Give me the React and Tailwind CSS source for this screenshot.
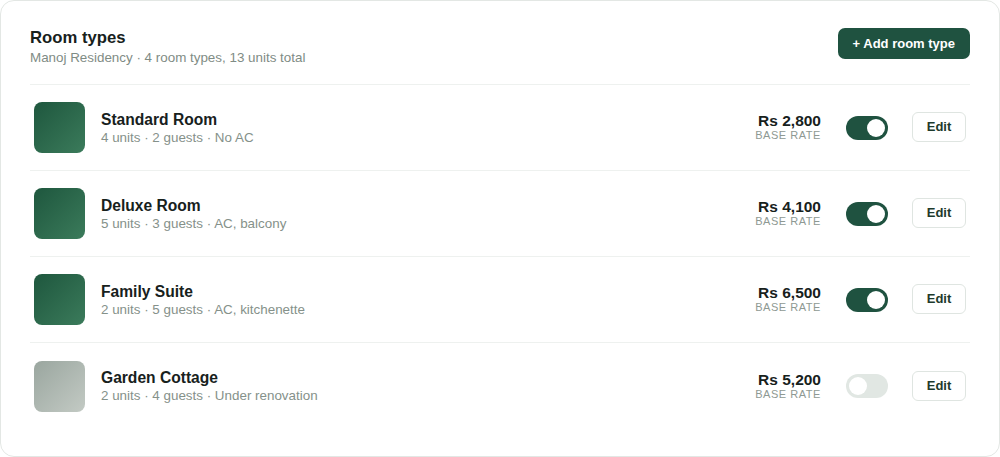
import React from "react";

const rooms = [
  { name: "Standard Room", info: "4 units · 2 guests · No AC", price: "Rs 2,800", on: true },
  { name: "Deluxe Room", info: "5 units · 3 guests · AC, balcony", price: "Rs 4,100", on: true },
  { name: "Family Suite", info: "2 units · 5 guests · AC, kitchenette", price: "Rs 6,500", on: true },
  { name: "Garden Cottage", info: "2 units · 4 guests · Under renovation", price: "Rs 5,200", on: false },
];

function Toggle({ on }) {
  return (
    <div
      className={
        on
          ? "w-[42px] h-[24px] rounded-full bg-[#1f5240] flex items-center justify-end px-[3px]"
          : "w-[42px] h-[24px] rounded-full bg-[#e1e7e3] flex items-center justify-start px-[3px]"
      }
    >
      <div className="w-[18px] h-[18px] rounded-full bg-white" />
    </div>
  );
}

export default function App() {
  return (
    <div
      className="w-[1000px] h-[457px] bg-white"
      style={{ fontFamily: '"Liberation Sans", Arial, sans-serif' }}
    >
      <div className="h-[457px] border border-[#e3e7e4] rounded-[14px] px-[29px] pt-[27px]">
        <div className="flex items-start justify-between border-b border-[#eef1ef] pb-[17px]">
          <div>
            <div className="text-[16.7px] leading-[20px] font-bold text-[#17211c]">Room types</div>
            <div className="text-[13.4px] leading-[18px] text-[#7f8c85] mt-[1px]">
              Manoj Residency · 4 room types, 13 units total
            </div>
          </div>
          <button className="h-[31px] px-[15px] rounded-[7px] bg-[#1f5240] text-white text-[13px] font-bold">
            + Add room type
          </button>
        </div>
        {rooms.map((r, i) => (
          <div
            key={r.name}
            className={
              i < rooms.length - 1
                ? "flex items-center h-[86px] border-b border-[#eef1ef] pl-[4px] pr-[4px]"
                : "flex items-center h-[86px] pl-[4px] pr-[4px]"
            }
          >
            <div
              className={
                r.on
                  ? "w-[51px] h-[51px] rounded-[8px] bg-gradient-to-br from-[#1e573e] to-[#3b7b5b]"
                  : "w-[51px] h-[51px] rounded-[8px] bg-gradient-to-br from-[#9aa69f] to-[#c3cac4]"
              }
            />
            <div className="ml-[16px] flex-1 pt-[2px]">
              <div className="text-[15.6px] leading-[18px] font-bold text-[#17211c]">{r.name}</div>
              <div className="text-[13.4px] leading-[18px] text-[#85918a]">{r.info}</div>
            </div>
            <div className="text-right -mt-[1px]">
              <div className="text-[15.5px] leading-[17px] font-bold text-[#17211c]">{r.price}</div>
              <div className="text-[11px] leading-[13px] text-[#8e9993] tracking-[0.05em]">BASE RATE</div>
            </div>
            <div className="ml-[25px]">
              <Toggle on={r.on} />
            </div>
            <button className="ml-[24px] w-[54px] h-[30px] -mt-[1px] rounded-[6px] border border-[#dfe5e1] text-[13px] font-bold text-[#1d3a2c] bg-white">
              Edit
            </button>
          </div>
        ))}
      </div>
    </div>
  );
}
